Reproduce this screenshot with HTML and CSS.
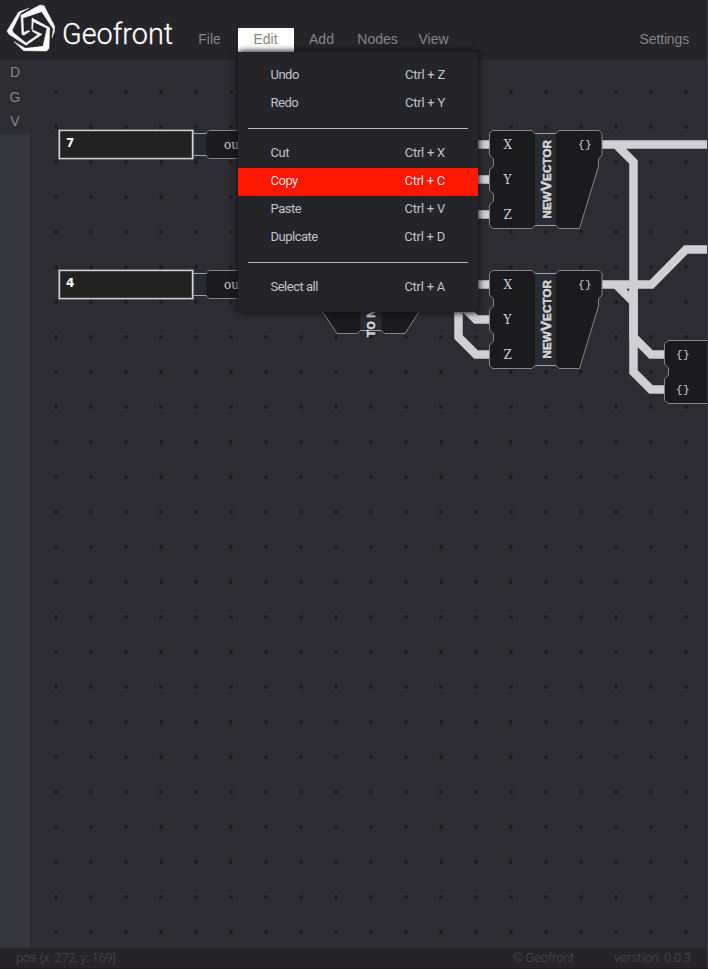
FILE: index.html
```html
<!DOCTYPE html>
<html lang="en">
<head>
<meta charset="utf-8">
<title>Geofront</title>
<link rel="stylesheet" href="styles.css">
</head>
<body>
<div class="app">
  <header class="header">
    <svg class="logo" viewBox="0 0 180 180">
      <path d="M63 46 120 15 132 17 164 79 163 95 156 113 160 87 125 35 69 54 71 98 83 92 90 93 73 105 66 104Z"/>
      <path d="M86 25 56 36 21 93 27 103 78 136 126 103 99 90 96 93 114 104 78 129 39 97 37 89 62 39Z"/>
      <path d="M96 54 149 83 147 145 140 153 71 152 42 125 76 145 129 139 141 85 100 65 98 89 95 88Z"/>
    </svg>
    <svg class="brand" viewBox="0 0 116 44"><text x="0" y="30" textLength="111" lengthAdjust="spacingAndGlyphs">Geofront</text></svg>
    <nav class="nav">
      <a>File</a><a class="active">Edit</a><a>Add</a><a>Nodes</a><a>View</a>
    </nav>
    <a class="settings">Settings</a>
  </header>

  <main class="workspace">
    <aside class="sidebar">
      <div class="tools"><span>D</span><span>G</span><span>V</span></div>
    </aside>
    <svg class="canvas" viewBox="30 60 678 888">
      <defs>
        <pattern id="dots" x="38.5" y="74.5" width="35" height="35" patternUnits="userSpaceOnUse">
          <circle class="dot" cx="17.500" cy="17.500" r="1.900"/>
        </pattern>
        <g id="vector">
          <path class="mid" d="M45 3.500H68V95.500H45Z"/>
          <path class="edge" d="M45 3.500H68M45 95.500H68"/>
          <path class="shell" d="M46 3.500 43 .5H3.500L.5 3.500V25L4.500 29V36L.5 40V60L4.500 64V71L.5 75V95L3.500 98.500H43L46 95.500"/>
          <path class="shell" d="M67 3.500 70 .5H110L113 3.500V25L109.500 29V36L90.500 98.500H70L67 95.500"/>
          <text class="port" x="14.500" y="18.500">X</text>
          <text class="port" x="14.500" y="53.500">Y</text>
          <text class="port" x="14.500" y="88.500">Z</text>
          <text class="port brace" y="18"><tspan x="89">{</tspan><tspan x="96">}</tspan></text>
          <text class="title" transform="translate(61.500 88.500) rotate(-90)" textLength="79">NEW<tspan class="cap">V</tspan>ECTOR</text>
        </g>
        <g id="number">
          <path class="mid" d="M134 3.500H150V25.500H134Z"/>
          <path class="edge" d="M134 3.500H149M134 25.500H149"/>
          <path class="shell" d="M190 .5H151L148 3.500M148 25.500 151 28.500H190"/>
          <path class="fill" d="M190 1H151L148.500 4V25L151 28H190Z"/>
          <rect class="outer" y="-.5" width="136" height="30"/>
          <rect class="field" x="1.500" y=".5" width="133" height="28"/>
          <text class="port" x="166" y="18.500">out</text>
        </g>
      </defs>
      <rect x="30" y="60" width="678" height="888" fill="url(#dots)"/>
      <g class="wires">
        <path d="M470 144.500H490M470 179.500H490M470 214.500H490M470 284.500H490"/>
        <path d="M458.500 290V337L476 354.500H490M458.500 302L476 319.500H490"/>
        <path d="M602 144.500H708M602 144.500H616L633.500 162V337L651 354.500H665"/>
        <path d="M633.500 290V372L651 389.500H665"/>
        <path d="M602 284.500H651.500L686 249.500H708M602 284.500H616L633.500 302"/>
      </g>
      <use href="#number" x="58" y="130"/>
      <use href="#number" x="58" y="270"/>
      <text class="value" x="66" y="147">7</text>
      <text class="value" x="66" y="287">4</text>
      <path class="mid" d="M359 290H383V330.500H359Z"/>
      <path class="edge" d="M359 330.500H383"/>
      <path class="shell" d="M308 290 337 333.500H357.500L360.500 330.500M433 290 405 333.500H385L381.500 330.500"/>
      <path class="fill" d="M309 290 337.500 333H357.500L360.500 330V290ZM432 290 404.500 333H385L381.500 330V290Z"/>
      <text class="title" transform="translate(375 337) rotate(-90)">T<tspan class="small">O</tspan><tspan dx="-1"> NUMBER</tspan></text>
      <use href="#vector" x="489" y="130"/>
      <use href="#vector" x="489" y="270"/>
      <path class="shell" d="M720 340.500H668L664.500 344V364L668.500 368V375L664.500 379V400L668 403.500H720Z"/>
      <text class="port brace" y="358"><tspan x="676">{</tspan><tspan x="683">}</tspan></text>
      <text class="port brace" y="393"><tspan x="676">{</tspan><tspan x="683">}</tspan></text>
    </svg>
  </main>

  <footer class="footer">
    <span class="pos">pos {x: 272, y: 169}</span>
    <span class="copyright">© Geofront</span>
    <span class="version">verstion: 0.0.3</span>
  </footer>
</div>

<div class="menu">
  <div class="item"><span>Undo</span><kbd>Ctrl + Z</kbd></div>
  <div class="item"><span>Redo</span><kbd>Ctrl + Y</kbd></div>
  <hr>
  <div class="item"><span>Cut</span><kbd>Ctrl + X</kbd></div>
  <div class="item selected"><span>Copy</span><kbd>Ctrl + C</kbd></div>
  <div class="item"><span>Paste</span><kbd>Ctrl + V</kbd></div>
  <div class="item"><span>Duplcate</span><kbd>Ctrl + D</kbd></div>
  <hr>
  <div class="item"><span>Select all</span><kbd>Ctrl + A</kbd></div>
</div>
</body>
</html>
```
FILE: styles.css
```css
* { box-sizing: border-box; }
body { margin: 0; background: #211f25; overflow: hidden; }
.app {
  width: 708px; height: 969px; display: flex; flex-direction: column;
  border-right: 1px solid #3b3b3f; border-bottom: 1px solid #1f1a20;
  font-family: "Liberation Sans", Arial, sans-serif; background: #2d2c32;
}
.header { height: 60px; flex: none; display: flex; background: #252428; color: #858585; font-size: 14px; }
.logo { width: 60px; height: 60px; fill: #fff; stroke: #fff; stroke-width: 1.500; flex: none; }
.brand { width: 116px; height: 44px; margin: 14px 0 0 2px; flex: none; overflow: visible; }
.brand text { font: 300 30px Roboto, sans-serif; fill: #fff; stroke: #fff; stroke-width: .3; }
.nav { display: flex; margin: 28px 0 0 3.500px; height: 24px; }
.nav a { width: 56px; text-align: center; line-height: 23px; }
.nav .active { background: #fff; }
.settings { margin: 28px 18px 0 auto; line-height: 23px; letter-spacing: -.15px; }

.workspace { flex: 1; display: flex; min-height: 0; }
.sidebar { width: 30px; flex: none; background: #35353d; color: #858585; font-size: 14px; }
.tools { background: #2d2c32; height: 74px; display: flex; flex-direction: column; }
.tools span { height: 24.500px; line-height: 24px; text-align: center; }
.canvas { width: 678px; height: 888px; flex: none; margin-right: -1px; clip-path: inset(0 1px 0 0); }
.dot { fill: #1b1a1e; }
.wires path { fill: none; stroke: #d0cfd4; stroke-width: 8.500; }
.shell { fill: #1b1b1d; stroke: #85858a; stroke-width: 1; }
.fill { fill: #1b1b1d; }
.mid { fill: #282b32; }
.edge { fill: none; stroke: #a0a0a5; }
.outer { fill: #77777c; }
.field { fill: #222; stroke: #d0cfd4; stroke-width: 1.400; }
.port { font: 12px "DejaVu Serif", serif; fill: #cfcfd2; }
.brace { font: 11px "Liberation Mono", monospace; }
.value { font: bold 12px "DejaVu Sans", sans-serif; fill: #fff; }
.title { font: bold 11.500px "Liberation Sans", sans-serif; letter-spacing: .6px; fill: #d6d6da; stroke: #d6d6da; stroke-width: .5; }
.title .cap { font-size: 15px; }
.title .small { font-size: 10.500px; }

.footer { height: 20px; flex: none; display: flex; background: #252428; color: #4c4b56; font: 300 13px/20px Roboto, sans-serif; padding: 0 16px; }
.pos { letter-spacing: -.4px; word-spacing: .5px; }
.copyright { margin-left: auto; margin-right: 40px; letter-spacing: -.2px; }
.version { letter-spacing: -.15px; }

.menu {
  position: absolute; left: 238px; top: 52px; width: 240px; height: 260px; padding: 10px 0;
  background: #252428; border-radius: 4px; box-shadow: 0 0 6px 1px #111114;
  font: 13px Roboto, sans-serif; color: #bec4cc;
}
.item { height: 28px; padding: 0 33px 0 32.500px; display: flex; justify-content: space-between; line-height: 26px; letter-spacing: -.5px; }
.item kbd { font: inherit; letter-spacing: -.25px; }
.selected { background: #ff1800; color: #f6dedb; }
.menu hr { margin: 10px; margin-bottom: 11px; border: 0; height: 1px; background: #b7b7bb; }
```
